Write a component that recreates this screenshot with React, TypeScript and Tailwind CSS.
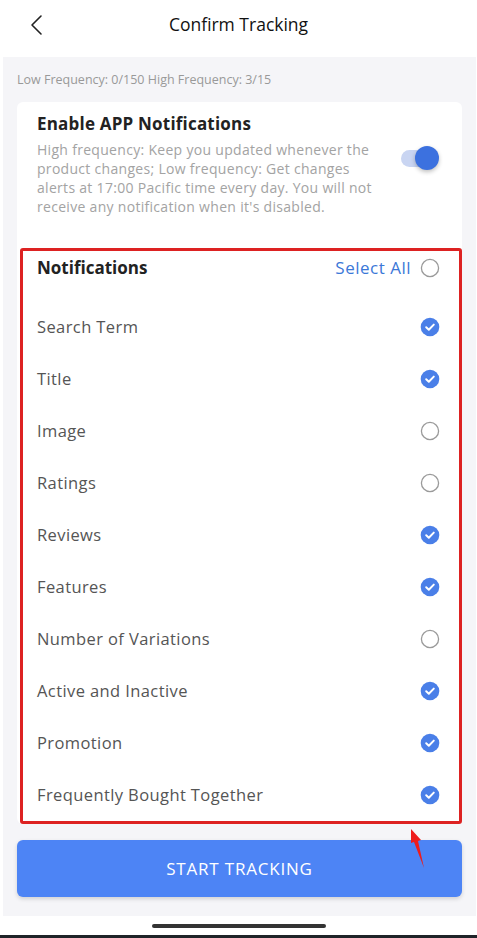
import { useState } from "react";

const items = [
  { label: "Search Term", on: true },
  { label: "Title", on: true },
  { label: "Image", on: false },
  { label: "Ratings", on: false },
  { label: "Reviews", on: true },
  { label: "Features", on: true },
  { label: "Number of Variations", on: false },
  { label: "Active and Inactive", on: true },
  { label: "Promotion", on: true },
  { label: "Frequently Bought Together", on: true },
];

function Check({ on }: { on: boolean }) {
  if (!on) {
    return (
      <svg width="20" height="20" viewBox="0 0 20 20">
        <circle cx="10" cy="10" r="8.6" fill="none" stroke="#9a9a9a" strokeWidth="1.3" />
      </svg>
    );
  }
  return (
    <svg width="20" height="20" viewBox="0 0 20 20">
      <circle cx="10" cy="10" r="9.3" fill="#4a7fe8" />
      <path d="M6.2 10.3 L8.8 12.7 L13.8 7.6" fill="none" stroke="#fff" strokeWidth="2" strokeLinecap="round" strokeLinejoin="round" />
    </svg>
  );
}

export default function App() {
  const [state, setState] = useState(items);
  const [enabled, setEnabled] = useState(true);
  const allOn = state.every((i) => i.on);

  return (
    <div
      className="w-[477px] h-[938px] bg-white flex flex-col overflow-hidden"
      style={{ fontFamily: "'Open Sans', 'Noto Sans', sans-serif" }}
    >
      <div className="h-[57px] shrink-0 relative flex items-center justify-center">
        <button className="absolute left-[28px] top-[14px] text-[#222]">
          <svg width="18" height="22" viewBox="0 0 18 22">
            <path d="M13 2 L4 11 L13 20" fill="none" stroke="#222" strokeWidth="1.6" strokeLinecap="round" strokeLinejoin="round" />
          </svg>
        </button>
        <h1 className="text-[17.5px] text-[#111] -mt-[9px]">Confirm Tracking</h1>
      </div>

      <div className="flex-1 ml-[3px] mr-[1px] bg-[#f5f5f8] px-[14px] pt-[14px] relative">
        <p className="h-[18px] leading-[18px] text-[12.5px] text-[#999] mb-[13px]">
          Low Frequency: 0/150 High Frequency: 3/15
        </p>

        <div className="bg-white rounded-md">
          <div className="flex pl-[20px] pr-[23px] pt-[11px] h-[146px]">
            <div className="flex-1">
              <h2 className="text-[17px] leading-[22px] font-bold tracking-[0.2px] text-[#222]">Enable APP Notifications</h2>
              <p className="w-[345px] mt-[5px] text-[14px] tracking-[0.3px] leading-[19px] text-[#a3a3a3]">
                High frequency: Keep you updated whenever the product changes; Low frequency: Get changes alerts at 17:00 Pacific time every day. You will not receive any notification when it's disabled.
              </p>
            </div>
            <button
              onClick={() => setEnabled(!enabled)}
              className="relative w-[38px] h-[25px] mt-[33px] shrink-0"
            >
              <span className="absolute left-0 top-[4px] w-[32px] h-[17px] rounded-full bg-[#c9d5f2]" />
              <span className="absolute right-0 top-0 w-[24px] h-[24px] rounded-full bg-[#3c71df] shadow-[0_2px_4px_rgba(0,0,0,0.25)]" />
            </button>
          </div>

          <div className="ml-[3px] border-[3px] border-[#dd2222] rounded-[3px]">
            <div className="h-[34px] flex items-center pl-[14px] pr-[19px] mb-[16px]">
              <span className="flex-1 text-[17px] font-bold text-[#222]">Notifications</span>
              <button
                className="flex items-center gap-[9px] text-[17px] tracking-[0.5px] text-[#3b78d8]"
                onClick={() => setState(state.map((i) => ({ ...i, on: !allOn })))}
              >
                Select All
                <Check on={allOn} />
              </button>
            </div>
            {state.map((item, idx) => (
              <div
                key={item.label}
                className="h-[52px] flex items-center pl-[14px] pr-[19px]"
                onClick={() =>
                  setState(state.map((s, j) => (j === idx ? { ...s, on: !s.on } : s)))
                }
              >
                <span className="flex-1 text-[16.5px] tracking-[0.4px] text-[#555]">{item.label}</span>
                <Check on={item.on} />
              </div>
            ))}
          </div>
        </div>

        <button className="mt-[16px] w-full h-[57px] rounded-md bg-[#4d84f5] text-white text-[17px] tracking-[0.8px] shadow-[0_2px_4px_rgba(0,0,0,0.15)]">
          START TRACKING
        </button>

        <svg className="absolute left-[403px] top-[769px]" width="26" height="44" viewBox="0 0 26 44">
          <polygon points="5,3 15,14 12,15 18,42 8,16 5,17" fill="#ee1c1c" />
        </svg>
      </div>

      <div className="h-[19px] shrink-0 flex items-center justify-center">
        <div className="w-[174px] h-[4px] rounded-full bg-[#333]" />
      </div>
      <div className="h-[3px] shrink-0 bg-[#1f2328]" />
    </div>
  );
}
